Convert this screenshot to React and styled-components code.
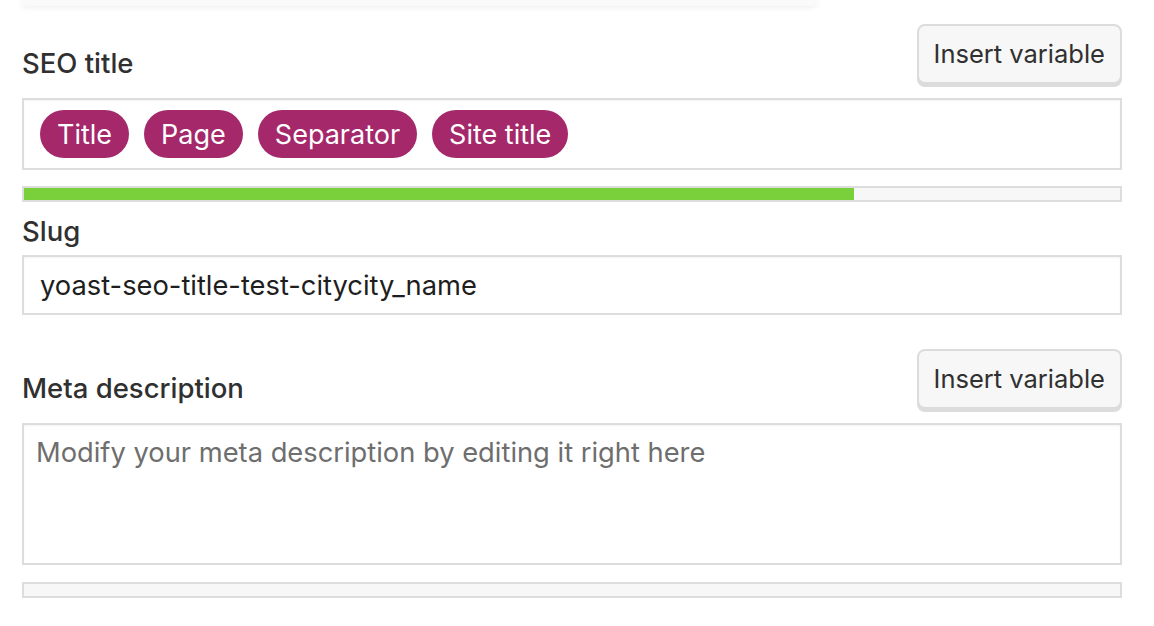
import React from 'react'
import styled, { createGlobalStyle } from 'styled-components'

const GlobalStyle = createGlobalStyle`
  body {
    margin: 0;
    background: #fff;
    font-family: Inter, "Open Sans", sans-serif;
    color: #303030;
  }
`

const replaceVars = ['Title', 'Page', 'Separator', 'Site title']

const App = () => {
  return (
    <Page>
      <GlobalStyle />
      <PreviewCard />
      <HeaderRow>
        <FieldLabel>SEO title</FieldLabel>
        <InsertButton>Insert variable</InsertButton>
      </HeaderRow>
      <TitleEditor>
        {replaceVars.map((v, i) => (
          <Pill key={i}>{v}</Pill>
        ))}
      </TitleEditor>
      <Progress>
        <ProgressFill style={{ width: '75.7%' }} />
      </Progress>
      <SlugLabel>Slug</SlugLabel>
      <SlugInput readOnly value="yoast-seo-title-test-citycity_name" />
      <HeaderRow second>
        <FieldLabel>Meta description</FieldLabel>
        <InsertButton>Insert variable</InsertButton>
      </HeaderRow>
      <DescArea readOnly placeholder="Modify your meta description by editing it right here" />
      <Progress bottom>
        <ProgressFill style={{ width: '0%' }} />
      </Progress>
    </Page>
  )
}
export default App

const Page = styled.div`
  padding: 0 32px 0 22px;
  display: flex;
  flex-direction: column;
`
const PreviewCard = styled.div`
  height: 6px;
  width: 798px;
  margin-left: -2px;
  background: #fafafa;
  border-radius: 0 0 12px 12px;
  box-shadow: 0 2px 5px rgba(0, 0, 0, 0.06);
`
const HeaderRow = styled.div`
  display: flex;
  justify-content: space-between;
  align-items: flex-end;
  margin-top: ${p => (p.second ? '34px' : '18px')};
  margin-bottom: 11px;
`
const FieldLabel = styled.div`
  font-size: 27.5px;
  line-height: 32px;
  font-weight: 500;
  color: #303030;
  margin-bottom: 8px;
`
const SlugLabel = styled(FieldLabel)`
  margin: 13px 0 8px;
`
const InsertButton = styled.button`
  font-family: Inter, "Open Sans", sans-serif;
  font-size: 25.5px;
  line-height: 32px;
  color: #303030;
  background: #f7f7f7;
  border: 2px solid #dcdcdc;
  border-radius: 8px;
  box-shadow: 0 3px 0 #dcdcdc;
  padding: 12px 15px;
  margin-bottom: 3px;
  cursor: pointer;
`
const TitleEditor = styled.div`
  display: flex;
  align-items: center;
  gap: 15px;
  height: 72px;
  box-sizing: border-box;
  border: 2px solid #dddddd;
  padding: 0 16px;
  box-shadow: inset 0 1px 2px rgba(0, 0, 0, 0.05);
`
const Pill = styled.span`
  display: inline-flex;
  align-items: center;
  height: 48px;
  padding: 0 17px;
  border-radius: 24px;
  background: #a4286a;
  color: #fff;
  font-size: 27px;
`
const Progress = styled.div`
  height: 16px;
  box-sizing: border-box;
  border: 2px solid #dddddd;
  background: #f7f7f7;
  margin-top: ${p => (p.bottom ? '17px' : '16px')};
`
const ProgressFill = styled.div`
  height: 100%;
  background: #7ad03a;
`
const SlugInput = styled.input`
  height: 60px;
  box-sizing: border-box;
  border: 2px solid #dddddd;
  padding: 0 16px;
  font-family: Inter, "Open Sans", sans-serif;
  font-size: 27.3px;
  color: #1e1e1e;
  outline: none;
  box-shadow: inset 0 1px 2px rgba(0, 0, 0, 0.05);
`
const DescArea = styled.textarea`
  height: 142px;
  box-sizing: border-box;
  border: 2px solid #dddddd;
  padding: 12px;
  font-family: Inter, "Open Sans", sans-serif;
  font-size: 27.3px;
  line-height: 32px;
  resize: none;
  outline: none;
  box-shadow: inset 0 1px 2px rgba(0, 0, 0, 0.05);
  &::placeholder {
    color: #6e6e6e;
  }
`
